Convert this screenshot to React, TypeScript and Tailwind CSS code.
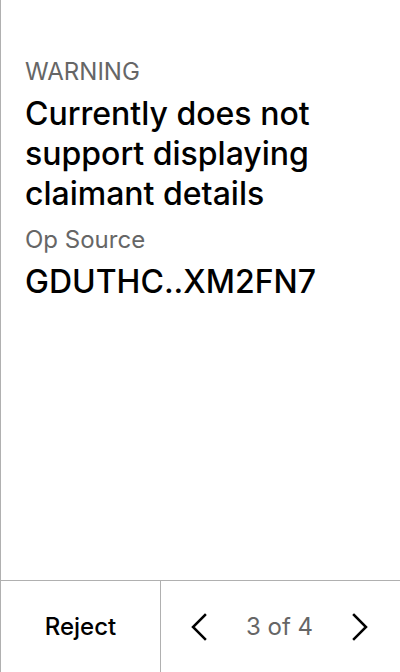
function Chevron({ dir }: { dir: "left" | "right" }) {
  return (
    <svg width="16" height="28" viewBox="0 0 16 28" fill="none" stroke="currentColor" strokeWidth="2.5" strokeLinecap="square">
      {dir === "left" ? (
        <polyline points="14,2 2,14 14,26" />
      ) : (
        <polyline points="2,2 14,14 2,26" />
      )}
    </svg>
  )
}

export default function App() {
  return (
    <div
      className="flex h-[672px] w-[400px] flex-col border-l border-[#b0b0b0] bg-white text-black"
      style={{ fontFamily: "Inter, 'Noto Sans', sans-serif" }}
    >
      {/* Operation details */}
      <div className="flex-1 px-6 pt-[58px]">
        <div className="text-[24px] leading-[28px] text-[#666666]">WARNING</div>
        <h1 className="mt-2 text-[32px] font-medium leading-[40px]">
          Currently does not support displaying claimant details
        </h1>
        <div className="mt-3 text-[24px] leading-[28px] text-[#666666]">Op Source</div>
        <div className="mt-2 text-[32px] font-medium leading-[40px]">GDUTHC..XM2FN7</div>
      </div>

      {/* Footer */}
      <div className="flex h-[92px] border-t border-[#b0b0b0]">
        <button className="flex w-[160px] items-center justify-center border-r border-[#b0b0b0] text-[24px] font-medium">
          Reject
        </button>
        <div className="flex flex-1 items-center justify-between pl-[30px] pr-[32px]">
          <Chevron dir="left" />
          <span className="text-[24px] text-[#666666]">3 of 4</span>
          <Chevron dir="right" />
        </div>
      </div>
    </div>
  )
}
